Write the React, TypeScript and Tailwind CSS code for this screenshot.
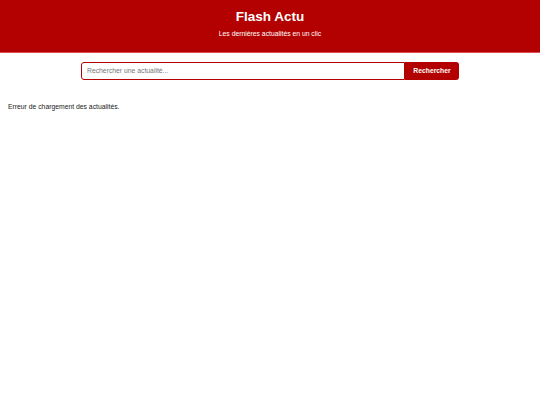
export default function App() {
  return (
    <div className="min-h-[405px] bg-white font-['Liberation_Sans',Arial,sans-serif] text-[#222]">
      <header className="h-[53px] bg-[#b30000] text-white text-center pt-[9px] border-b border-[#e05050]">
        <h1 className="text-[13.5px] font-bold leading-[16px]">Flash Actu</h1>
        <p className="text-[6.8px] leading-[9px] mt-[4px]">Les dernières actualités en un clic</p>
      </header>

      <div className="flex justify-center pt-[9px]">
        <div className="flex w-[378px] h-[18px]">
          <input
            type="text"
            placeholder="Rechercher une actualité..."
            className="flex-1 min-w-0 border border-[#b30000] rounded-l-[3px] px-[5px] text-[6.8px] text-[#333] placeholder:text-[#777] outline-none"
          />
          <button className="w-[54px] bg-[#b30000] text-white text-[6.8px] font-bold rounded-r-[3px]">
            Rechercher
          </button>
        </div>
      </div>

      <p className="text-[6.8px] leading-[9px] pl-[8px] mt-[22px]">Erreur de chargement des actualités.</p>
    </div>
  )
}
